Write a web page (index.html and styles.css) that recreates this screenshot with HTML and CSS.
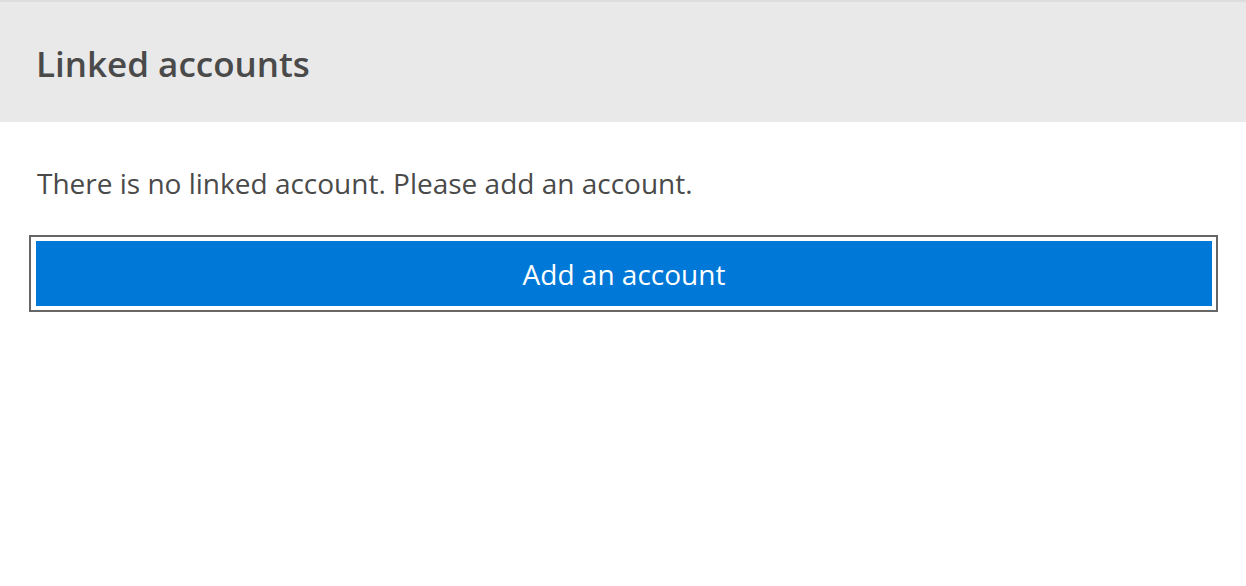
FILE: index.html
```html
<!DOCTYPE html>
<html>
<head>
<meta charset="utf-8">
<link rel="stylesheet" href="styles.css">
</head>
<body>
<div class="page">
  <header class="header">
    <h1 class="title">Linked accounts</h1>
  </header>
  <main class="content">
    <p class="message">There is no linked account. Please add an account.</p>
    <div class="focus-ring">
      <button class="add-btn" type="button">Add an account</button>
    </div>
  </main>
</div>
</body>
</html>
```
FILE: styles.css
```css
html, body {
  margin: 0;
  padding: 0;
  background: #ffffff;
}
body {
  font-family: "Open Sans", "Noto Sans", sans-serif;
  color: #444444;
}
.page {
  display: flex;
  flex-direction: column;
}
.header {
  border-top: 2px solid #dddddd;
  background: #e9e9ea;
  display: flex;
  align-items: center;
  padding: 4px 37px 0;
  box-sizing: border-box;
  height: 122px;
}
.title {
  margin: 0 0 0 -1px;
  font-size: 35px;
  line-height: 44px;
  font-weight: 600;
  color: #4a4a4a;
}
.content {
  padding: 0 28px 0 29px;
  display: flex;
  flex-direction: column;
}
.message {
  margin: 44px 0 0 8px;
  font-size: 28px;
  line-height: 34px;
  color: #4a4a4a;
}
.focus-ring {
  margin-top: 35px;
  border: 2px solid #666666;
  padding: 4px 4px 4px 5px;
  display: flex;
}
.add-btn {
  flex: 1;
  height: 65px;
  border: none;
  background: #0078d7;
  color: #ffffff;
  font-family: "Open Sans", "Noto Sans", sans-serif;
  font-size: 28px;
  padding: 0;
}
```
